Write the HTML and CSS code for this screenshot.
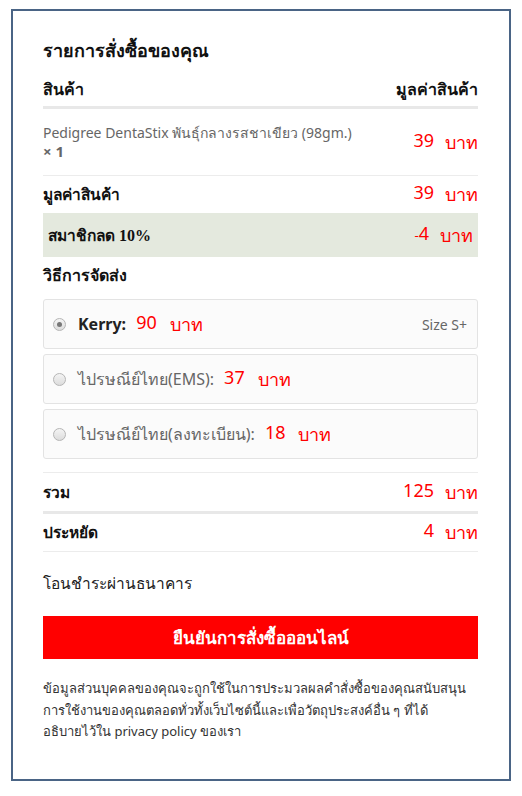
FILE: index.html
```html
<!DOCTYPE html>
<html lang="th">
<head>
  <meta charset="UTF-8">
  <title>รายการสั่งซื้อของคุณ</title>
  <link rel="stylesheet" href="styles.css">
</head>
<body>

<div class="order">
  <h2 class="order-title">รายการสั่งซื้อของคุณ</h2>

  <div class="row row-head">
    <span>สินค้า</span>
    <span>มูลค่าสินค้า</span>
  </div>

  <div class="row row-item">
    <div class="item-name">
      Pedigree DentaStix พันธุ์กลางรสชาเขียว (98gm.)
      <div class="item-qty">× 1</div>
    </div>
    <div class="price"><span>39</span><span>บาท</span></div>
  </div>

  <div class="row row-sub">
    <span class="label">มูลค่าสินค้า</span>
    <div class="price"><span>39</span><span>บาท</span></div>
  </div>

  <div class="row row-discount">
    <span class="label">สมาชิกลด <b class="serif">10%</b></span>
    <div class="price"><span><small>-</small>4</span><span>บาท</span></div>
  </div>

  <div class="ship-title">วิธีการจัดส่ง</div>
  <div class="ship-list">
    <div class="ship-option selected">
      <span class="radio"></span>
      <span class="ship-name">Kerry:</span>
      <div class="price"><span>90</span><span>บาท</span></div>
      <span class="ship-note">Size S+</span>
    </div>
    <div class="ship-option">
      <span class="radio"></span>
      <span class="ship-name">ไปรษณีย์ไทย(EMS):</span>
      <div class="price"><span>37</span><span>บาท</span></div>
    </div>
    <div class="ship-option">
      <span class="radio"></span>
      <span class="ship-name">ไปรษณีย์ไทย(ลงทะเบียน):</span>
      <div class="price"><span>18</span><span>บาท</span></div>
    </div>
  </div>

  <div class="totals">
    <div class="row row-total">
      <span class="label">รวม</span>
      <div class="price"><span>125</span><span>บาท</span></div>
    </div>
    <div class="row row-save">
      <span class="label">ประหยัด</span>
      <div class="price"><span>4</span><span>บาท</span></div>
    </div>
  </div>

  <p class="payment">โอนชำระผ่านธนาคาร</p>

  <button class="confirm">ยืนยันการสั่งซื้อออนไลน์</button>

  <p class="privacy">ข้อมูลส่วนบุคคลของคุณจะถูกใช้ในการประมวลผลคำสั่งซื้อของคุณสนับสนุนการใช้งานของคุณตลอดทั่วทั้งเว็บไซต์นี้และเพื่อวัตถุประสงค์อื่น ๆ ที่ได้<br>อธิบายไว้ใน privacy policy ของเรา</p>
</div>

</body>
</html>
```

FILE: styles.css
```css
body { margin: 0; font-family: "Noto Sans", "DejaVu Sans", sans-serif; color: #111; background: #fff; }
.order { box-sizing: border-box; width: 500px; height: 772px; margin: 9px 11px; border: 2px solid #4a6485; padding: 27px 31px 0 30px; }
.order-title { margin: 0; font-size: 18px; line-height: 24px; font-weight: bold; color: #111; }

.row { display: flex; justify-content: space-between; align-items: center; }
.row-head { font-size: 16px; font-weight: bold; line-height: 22px; padding: 16px 0 6px; border-bottom: 3px solid #e8e8e8; }
.row-item { height: 66px; border-bottom: 1px solid #ececec; }
.item-name { font-size: 14px; line-height: 18px; color: #666; }
.item-qty { font-weight: bold; font-size: 15px; }
.row-sub { height: 37px; }
.row-discount { height: 44px; background: #e4e9de; padding: 0 5px; }
.label { font-size: 15.5px; font-weight: bold; }
.serif { font-family: "Liberation Serif", serif; font-size: 16px; }

.price { display: flex; gap: 11px; color: #ff0000; font-size: 18px; }
.price small { font-size: 13px; }

.ship-title { font-size: 16px; font-weight: bold; line-height: 36px; }
.ship-list { display: flex; flex-direction: column; gap: 5px; margin-top: 6px; }
.ship-option { display: flex; align-items: center; height: 50px; box-sizing: border-box; padding: 0 10px 0 9px; background: #fbfbfb; border: 1px solid #e3e3e3; border-radius: 3px; font-size: 16px; color: #666; }
.ship-option .price { margin-left: 10px; gap: 13px; }
.ship-option.selected .ship-name { font-weight: bold; color: #222; }
.ship-note { margin-left: auto; font-size: 14px; color: #666; }
.radio { width: 11px; height: 11px; border-radius: 50%; border: 1px solid #b5b5b5; background: linear-gradient(#f4f4f4, #dcdcdc); margin-right: 12px; position: relative; }
.selected .radio::after { content: ""; position: absolute; left: 3px; top: 3px; width: 5px; height: 5px; border-radius: 50%; background: #777; }

.totals { margin-top: 13px; border-top: 1px solid #ececec; border-bottom: 1px solid #ececec; }
.row-total { height: 38px; border-bottom: 3px solid #e8e8e8; }
.row-save { height: 37px; }

.payment { margin: 20px 0 0; font-size: 15.5px; line-height: 22px; color: #222; }
.confirm { display: block; width: 100%; height: 43px; margin-top: 22px; border: none; background: #ff0000; color: #fff; font-family: inherit; font-size: 17px; font-weight: bold; cursor: pointer; }
.privacy { margin: 19px 0 0; font-size: 13px; line-height: 21.5px; color: #333; }
```
